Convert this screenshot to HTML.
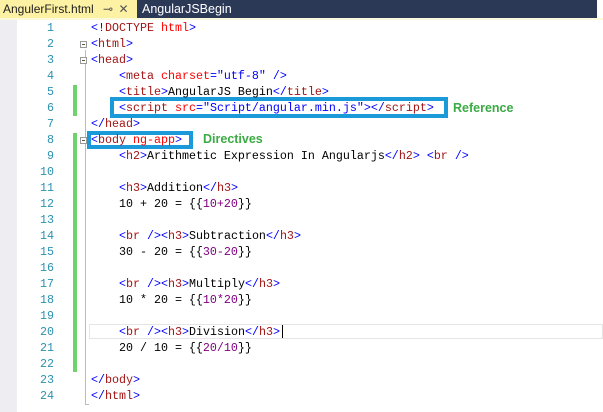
<!DOCTYPE html>
<html><head><meta charset="utf-8"><style>
body{margin:0;width:603px;height:412px;background:#fff;position:relative;overflow:hidden;font-family:"Liberation Mono",monospace;font-size:11.67px}
.tabbar{position:absolute;left:0;top:0;width:597px;height:18px;background:#2b3856}
.tab1{position:absolute;left:0;top:0;width:137px;height:18px;background:#fdf1a4;font-family:"Liberation Sans",sans-serif;font-size:12px;color:#1e1e1e;line-height:18px;padding-left:3px;box-sizing:border-box;white-space:nowrap;overflow:hidden}
.tab2{position:absolute;left:142px;top:0;height:18px;font-family:"Liberation Sans",sans-serif;font-size:12.5px;color:#fff;line-height:18px}
.strip{position:absolute;left:0;top:18px;width:603px;height:2px;background:#fdf9dc}
.gut{position:absolute;left:0;top:20px;width:17px;height:392px;background:#eeeef2}
.ln{position:absolute;left:17px;width:37px;text-align:right;color:#2b91af}
.code{position:absolute;left:91px;color:#000}
.row{height:16px;line-height:16px;white-space:pre}
.t{color:#a31515}.b{color:#0000ff}.a{color:#ff0000}.p{color:#800080}
.bar{position:absolute;left:73px;width:4px;background:#6fd36b}
.fold{position:absolute;left:80px;width:7px;height:7px;border:1px solid #999;box-sizing:border-box;background:#fff}
.fold:after{content:"";position:absolute;left:1px;top:2px;width:3px;height:1px;background:#555}
.box{position:absolute;border:4px solid #1a9ad8;box-sizing:border-box}
.lbl{position:absolute;font-family:"Liberation Sans",sans-serif;font-weight:bold;font-size:12.5px;color:#3bab44}
</style></head><body>
<div class="tabbar"></div>
<div class="tab1">AngulerFirst.html <span style="margin-left:6px;color:#555">⊸</span> <span style="margin-left:2px;color:#555">✕</span></div>
<div class="tab2">AngularJSBegin</div>
<div class="strip"></div>
<div class="gut"></div>
<div style="position:absolute;left:85px;top:50px;width:1px;height:355px;background:#bbb"></div>
<div style="position:absolute;left:85px;top:404px;width:4px;height:1px;background:#bbb"></div>
<div class="bar" style="top:85px;height:31px"></div>
<div class="bar" style="top:133px;height:239px"></div>
<div class="fold" style="top:41px"></div>
<div class="fold" style="top:57px"></div>
<div class="fold" style="top:137px"></div>
<div style="position:absolute;left:89px;top:324px;width:514px;height:15px;border:1px solid #e5e5e5;box-sizing:border-box"></div>
<div style="position:absolute;left:282px;top:325px;width:1px;height:13px;background:#000"></div>
<div class="ln" style="top:20px">
<div class="row">1</div><div class="row">2</div><div class="row">3</div><div class="row">4</div><div class="row">5</div><div class="row">6</div><div class="row">7</div><div class="row">8</div><div class="row">9</div><div class="row">10</div><div class="row">11</div><div class="row">12</div><div class="row">13</div><div class="row">14</div><div class="row">15</div><div class="row">16</div><div class="row">17</div><div class="row">18</div><div class="row">19</div><div class="row">20</div><div class="row">21</div><div class="row">22</div><div class="row">23</div><div class="row">24</div>
</div>
<div class="box" style="left:110px;top:97px;width:338px;height:21px"></div>
<div class="box" style="left:87px;top:131px;width:106px;height:18px"></div>
<div class="code" style="top:20px">
<div class="row"><span class="b">&lt;!</span><span class="t">DOCTYPE</span> <span class="a">html</span><span class="b">&gt;</span></div>
<div class="row"><span class="b">&lt;</span><span class="t">html</span><span class="b">&gt;</span></div>
<div class="row"><span class="b">&lt;</span><span class="t">head</span><span class="b">&gt;</span></div>
<div class="row">    <span class="b">&lt;</span><span class="t">meta</span> <span class="a">charset</span><span class="b">="utf-8" /&gt;</span></div>
<div class="row">    <span class="b">&lt;</span><span class="t">title</span><span class="b">&gt;</span>AngularJS Begin<span class="b">&lt;/</span><span class="t">title</span><span class="b">&gt;</span></div>
<div class="row">    <span class="b">&lt;</span><span class="t">script</span> <span class="a">src</span><span class="b">="Script/angular.min.js"&gt;&lt;/</span><span class="t">script</span><span class="b">&gt;</span></div>
<div class="row"><span class="b">&lt;/</span><span class="t">head</span><span class="b">&gt;</span></div>
<div class="row"><span class="b">&lt;</span><span class="t">body</span> <span class="a">ng-app</span><span class="b">&gt;</span></div>
<div class="row">    <span class="b">&lt;</span><span class="t">h2</span><span class="b">&gt;</span>Arithmetic Expression In Angularjs<span class="b">&lt;/</span><span class="t">h2</span><span class="b">&gt;</span> <span class="b">&lt;</span><span class="t">br</span> <span class="b">/&gt;</span></div>
<div class="row"> </div>
<div class="row">    <span class="b">&lt;</span><span class="t">h3</span><span class="b">&gt;</span>Addition<span class="b">&lt;/</span><span class="t">h3</span><span class="b">&gt;</span></div>
<div class="row">    10 + 20 = {{<span class="p">10+20</span>}}</div>
<div class="row"> </div>
<div class="row">    <span class="b">&lt;</span><span class="t">br</span> <span class="b">/&gt;&lt;</span><span class="t">h3</span><span class="b">&gt;</span>Subtraction<span class="b">&lt;/</span><span class="t">h3</span><span class="b">&gt;</span></div>
<div class="row">    30 - 20 = {{<span class="p">30-20</span>}}</div>
<div class="row"> </div>
<div class="row">    <span class="b">&lt;</span><span class="t">br</span> <span class="b">/&gt;&lt;</span><span class="t">h3</span><span class="b">&gt;</span>Multiply<span class="b">&lt;/</span><span class="t">h3</span><span class="b">&gt;</span></div>
<div class="row">    10 * 20 = {{<span class="p">10*20</span>}}</div>
<div class="row"> </div>
<div class="row">    <span class="b">&lt;</span><span class="t">br</span> <span class="b">/&gt;&lt;</span><span class="t">h3</span><span class="b">&gt;</span>Division<span class="b">&lt;/</span><span class="t">h3</span><span class="b">&gt;</span></div>
<div class="row">    20 / 10 = {{<span class="p">20/10</span>}}</div>
<div class="row"> </div>
<div class="row"><span class="b">&lt;/</span><span class="t">body</span><span class="b">&gt;</span></div>
<div class="row"><span class="b">&lt;/</span><span class="t">html</span><span class="b">&gt;</span></div>
</div>
<div class="lbl" style="left:453px;top:101px">Reference</div>
<div class="lbl" style="left:203px;top:132px">Directives</div>
</body></html>
